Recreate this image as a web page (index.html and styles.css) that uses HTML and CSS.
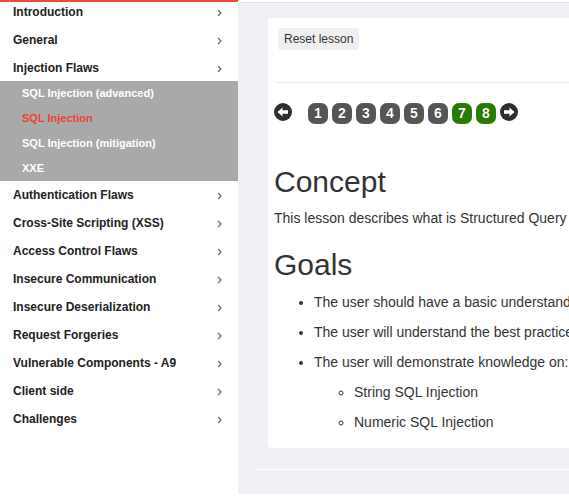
FILE: index.html
```html
<!DOCTYPE html>
<html lang="en">
<head>
<meta charset="utf-8">
<title>WebGoat - SQL Injection</title>
<link rel="stylesheet" href="styles.css">
</head>
<body>
<div class="page">
  <nav class="sidebar">
    <div class="topbar"></div>
    <ul class="menu">
      <li class="cat"><span>Introduction</span><svg class="chev" width="5" height="8" viewBox="0 0 5 8"><path d="M1 1 L4 4 L1 7" fill="none" stroke="#666" stroke-width="1.2"/></svg></li>
      <li class="cat"><span>General</span><svg class="chev" width="5" height="8" viewBox="0 0 5 8"><path d="M1 1 L4 4 L1 7" fill="none" stroke="#666" stroke-width="1.2"/></svg></li>
      <li class="cat"><span>Injection Flaws</span><svg class="chev" width="5" height="8" viewBox="0 0 5 8"><path d="M1 1 L4 4 L1 7" fill="none" stroke="#666" stroke-width="1.2"/></svg></li>
      <li class="sub">
        <ul class="submenu">
          <li>SQL Injection (advanced)</li>
          <li class="active">SQL Injection</li>
          <li>SQL Injection (mitigation)</li>
          <li>XXE</li>
        </ul>
      </li>
      <li class="cat"><span>Authentication Flaws</span><svg class="chev" width="5" height="8" viewBox="0 0 5 8"><path d="M1 1 L4 4 L1 7" fill="none" stroke="#666" stroke-width="1.2"/></svg></li>
      <li class="cat"><span>Cross-Site Scripting (XSS)</span><svg class="chev" width="5" height="8" viewBox="0 0 5 8"><path d="M1 1 L4 4 L1 7" fill="none" stroke="#666" stroke-width="1.2"/></svg></li>
      <li class="cat"><span>Access Control Flaws</span><svg class="chev" width="5" height="8" viewBox="0 0 5 8"><path d="M1 1 L4 4 L1 7" fill="none" stroke="#666" stroke-width="1.2"/></svg></li>
      <li class="cat"><span>Insecure Communication</span><svg class="chev" width="5" height="8" viewBox="0 0 5 8"><path d="M1 1 L4 4 L1 7" fill="none" stroke="#666" stroke-width="1.2"/></svg></li>
      <li class="cat"><span>Insecure Deserialization</span><svg class="chev" width="5" height="8" viewBox="0 0 5 8"><path d="M1 1 L4 4 L1 7" fill="none" stroke="#666" stroke-width="1.2"/></svg></li>
      <li class="cat"><span>Request Forgeries</span><svg class="chev" width="5" height="8" viewBox="0 0 5 8"><path d="M1 1 L4 4 L1 7" fill="none" stroke="#666" stroke-width="1.2"/></svg></li>
      <li class="cat"><span>Vulnerable Components - A9</span><svg class="chev" width="5" height="8" viewBox="0 0 5 8"><path d="M1 1 L4 4 L1 7" fill="none" stroke="#666" stroke-width="1.2"/></svg></li>
      <li class="cat"><span>Client side</span><svg class="chev" width="5" height="8" viewBox="0 0 5 8"><path d="M1 1 L4 4 L1 7" fill="none" stroke="#666" stroke-width="1.2"/></svg></li>
      <li class="cat"><span>Challenges</span><svg class="chev" width="5" height="8" viewBox="0 0 5 8"><path d="M1 1 L4 4 L1 7" fill="none" stroke="#666" stroke-width="1.2"/></svg></li>
    </ul>
  </nav>
  <main class="main">
    <section class="card">
      <div class="card-head">
        <button class="reset">Reset lesson</button>
      </div>
      <div class="pager">
        <svg class="arrow" width="18" height="18" viewBox="0 0 18 18"><circle cx="9" cy="9" r="9" fill="#2e2e2e"/><path d="M3.5 9 L8.5 4.5 L8.5 7.3 L14 7.3 L14 10.7 L8.5 10.7 L8.5 13.5 Z" fill="#fff"/></svg>
        <div class="pages">
          <span class="pg">1</span>
          <span class="pg">2</span>
          <span class="pg">3</span>
          <span class="pg">4</span>
          <span class="pg">5</span>
          <span class="pg">6</span>
          <span class="pg done">7</span>
          <span class="pg done">8</span>
        </div>
        <svg class="arrow" width="18" height="18" viewBox="0 0 18 18"><circle cx="9" cy="9" r="9" fill="#2e2e2e"/><path d="M14.5 9 L9.5 4.5 L9.5 7.3 L4 7.3 L4 10.7 L9.5 10.7 L9.5 13.5 Z" fill="#fff"/></svg>
      </div>
      <div class="lesson">
        <h2>Concept</h2>
        <p>This lesson describes what is Structured Query Language (SQL) and how it can be manipulated to perform tasks that were not the original intent of the developer.</p>
        <h2>Goals</h2>
        <ul class="goals">
          <li>The user should have a basic understanding of how SQL works and what it is used for</li>
          <li>The user will understand the best practices for preventing SQL injection</li>
          <li>The user will demonstrate knowledge on:
            <ul class="subgoals">
              <li>String SQL Injection</li>
              <li>Numeric SQL Injection</li>
            </ul>
          </li>
        </ul>
      </div>
    </section>
    <div class="footer"></div>
  </main>
</div>
</body>
</html>
```
FILE: styles.css
```css
html, body {
  margin: 0;
  padding: 0;
  overflow: hidden;
  background: #fff;
  font-family: "Liberation Sans", Arial, sans-serif;
  color: #333;
}
.page {
  display: flex;
  align-items: flex-start;
  width: 1400px;
}
.sidebar {
  position: relative;
  width: 238px;
  flex: none;
  background: #fff;
}
.topbar {
  position: absolute;
  top: 0;
  left: 0;
  width: 238px;
  height: 2px;
  background: #e94b3c;
  z-index: 2;
}
.menu {
  list-style: none;
  margin: -2px 0 0 0;
  padding: 0;
}
.cat {
  display: flex;
  align-items: center;
  justify-content: space-between;
  height: 28px;
  padding: 0 16px 0 13px;
  font-size: 12px;
  font-weight: bold;
  color: #222;
}
.chev {
  display: block;
  margin-top: 1px;
}
.submenu {
  list-style: none;
  margin: -1px 0 0 0;
  padding: 0;
  background: #a9a9a9;
}
.submenu li {
  height: 25px;
  line-height: 25px;
  padding-left: 22px;
  font-size: 11px;
  font-weight: bold;
  color: #fff;
}
.submenu li.active {
  color: #ea4335;
}
.main {
  flex: 1;
  margin-top: 2px;
  border-top: 1px solid #e3e4e8;
  background: #f0f1f5;
  padding: 15px 0 0 30px;
}
.card {
  background: #fff;
  border-radius: 4px;
  padding: 0 6px 6px;
}
.card-head {
  height: 44px;
  padding: 10px 4px;
  border-radius: 4px;
  box-shadow: 0 1px 1px rgba(0, 0, 0, 0.09);
}
.reset {
  font-family: "Liberation Sans", Arial, sans-serif;
  font-size: 12px;
  color: #333;
  background: #efefef;
  border: none;
  border-radius: 3px;
  height: 22px;
  padding: 0 6px;
}
.pager {
  display: flex;
  align-items: center;
  margin-top: 20px;
  height: 22px;
}
.arrow {
  display: block;
  margin-top: -2px;
}
.pages {
  display: flex;
  gap: 4px;
  margin: 0 4px 0 16px;
}
.pg {
  display: flex;
  align-items: center;
  justify-content: center;
  width: 20px;
  height: 21px;
  border-radius: 7px;
  background: #555;
  color: #fff;
  font-size: 14px;
  font-weight: bold;
  text-shadow: 0 0 1px rgba(0, 0, 0, 0.6);
}
.pg.done {
  background: #2a7a06;
}
.lesson {
  padding-top: 21px;
}
.lesson h2 {
  font-size: 30px;
  font-weight: normal;
  line-height: 33px;
  margin: 20px 0 10px;
  color: #333;
}
.lesson p {
  font-size: 14px;
  line-height: 20px;
  margin: 0 0 10px;
  white-space: nowrap;
}
.goals {
  margin: 0 0 10px;
  padding-left: 40px;
  font-size: 14px;
  line-height: 20px;
  white-space: nowrap;
}
.goals li {
  padding-top: 1px;
  margin-bottom: 9px;
}
.subgoals {
  list-style-type: circle;
  margin: 9px 0 0;
  padding-left: 40px;
}
.footer {
  margin: 21px 0 0 -15px;
  height: 24px;
  border-top: 1px solid #fff;
}
```
